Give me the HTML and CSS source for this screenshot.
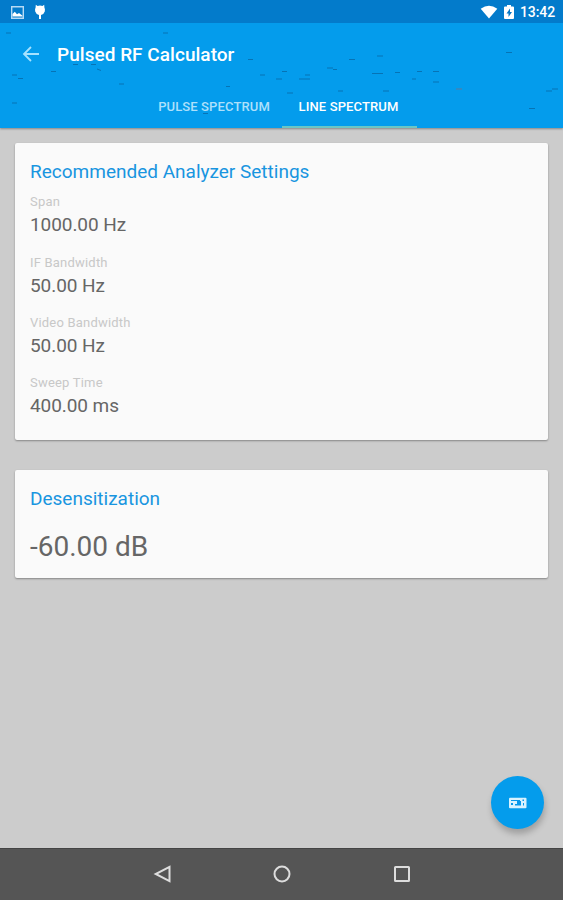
FILE: index.html
```
<!DOCTYPE html>
<html lang="en">
<head>
  <meta charset="utf-8">
  <title>Pulsed RF Calculator</title>
  <link rel="stylesheet" href="styles.css">
</head>
<body>
  <header class="header">
    <div class="status">
      <svg class="icon-image" width="13" height="13" viewBox="0 0 13 13"><path fill="none" stroke="#b5daf4" stroke-width="1.4" d="M.7.7h11.600v11.600H.7z"/><path fill="#fff" d="M1.500 10.500V8l2.300-2.200 2.200 2.400 2-1.200 3.500 2.700v.8z"/></svg>
      <svg class="icon-bug" width="12" height="16" viewBox="0 0 12 16"><path fill="#fff" d="M1.800.8 3.500 2Q6 1 8.500 2L10.200.8l.2 2.700Q11.300 5 10.800 7.500 9.800 10.500 7 11v4H5v-4Q2.200 10.500 1.200 7.500.7 5 1.600 3.500z"/></svg>
      <svg class="icon-wifi" width="18" height="14" viewBox="0 0 18 14"><path fill="#fff" d="M.7 3.700Q9-2.400 17.300 3.700L9 13.500z"/></svg>
      <svg class="icon-battery" width="10" height="15" viewBox="0 0 10 15"><path fill="#fff" d="M3 0h4v1.500h2q1 0 1 1V13q0 1-1 1H1q-1 0-1-1V2.500q0-1 1-1h2z"/><path fill="#0878c6" d="M6 3.500 2.500 8.500h2V12L8 7H6z"/></svg>
      <span class="clock">13:42</span>
    </div>
    <div class="toolbar">
      <svg class="back" width="18" height="18" viewBox="0 0 18 18"><path fill="none" stroke="#a6e2ff" stroke-width="1.800" d="M17 9H2M9 2 2 9l7 7"/></svg>
      <h1>Pulsed RF Calculator</h1>
    </div>
    <nav class="tabs">
      <a class="tab">PULSE SPECTRUM</a>
      <a class="tab active">LINE SPECTRUM</a>
    </nav>
    <svg class="specks" width="563" height="128" viewBox="0 0 563 128"><path fill="none" stroke="#0869a8" stroke-opacity=".8" d="M6 33h5M163 33h5M73 64.500h5M91 64.500h5M97 69l4 1.500M51 71.500h5M12 75h5M18 78.500h5M119 84h5M12 103h5M248 59.500h5M260 75h5M276 79h6M226 86.500h4M203 113.500h5M282 71.500h5M299 79h11M305 75h5M287 93h6M327 68h6M333 69.500h4M349 59.500h6M377 56h6M372 73.500h11M395 72.500h5M412 79h4M417 71.500h5M433 71.500h6M433 82h6M338 91h5M383 91h6M506 52.500h6M552 89h6M546 91h6M529 108.500h6"/><path stroke="#5e789b" d="M456 89h6"/></svg>
  </header>

  <main class="content">
    <section class="card settings">
      <h2>Recommended Analyzer Settings</h2>
      <dl>
        <dt>Span</dt>
        <dd>1000.00 Hz</dd>
        <dt>IF Bandwidth</dt>
        <dd>50.00 Hz</dd>
        <dt>Video Bandwidth</dt>
        <dd>50.00 Hz</dd>
        <dt>Sweep Time</dt>
        <dd>400.00 ms</dd>
      </dl>
    </section>
    <section class="card desens">
      <h2>Desensitization</h2>
      <p class="result">-60.00 dB</p>
    </section>
    <a class="fab">
      <svg width="18" height="12" viewBox="0 0 18 12"><rect y=".7" width="17.500" height="10.600" rx="1" fill="#d8f2ff"/><path fill="#0698eb" d="M2 3h9v1H2zM2 6h2v2H2zM8 4h4v4.500H6V7h2zM13.500 2.500H15V4h-1.500zM14 6h1v2.500h-1z"/></svg>
    </a>
  </main>

  <footer class="navbar">
    <svg width="18" height="18" viewBox="0 0 18 18"><path d="M16.500 1.800v14.400L2.700 9z"/></svg>
    <svg width="18" height="18" viewBox="0 0 18 18"><circle cx="9" cy="9" r="7.500"/></svg>
    <svg width="18" height="18" viewBox="0 0 18 18"><rect x="2" y="2" width="14" height="14" rx=".5"/></svg>
  </footer>
</body>
</html>
```

FILE: styles.css
```
* { box-sizing: border-box; }
body { margin: 0; width: 563px; height: 900px; display: flex; flex-direction: column; overflow: hidden; background: #ccc; font-family: Roboto, sans-serif; }
h1, h2, p, dl, dd { margin: 0; font-weight: 400; }
svg { display: block; flex: none; }

.header { position: relative; z-index: 1; height: 128px; background: #049cec; box-shadow: 0 1px 2px rgba(0,0,0,.35); }
.specks { position: absolute; top: 0; left: 0; }
.status { height: 23px; display: flex; align-items: center; padding: 1px 8px 0 11px; background: #037bcb; }
.icon-bug { margin-left: 10px; }
.icon-wifi { margin: 0 0 1px auto; }
.icon-battery { margin: 0 6px 0 6px; }
.clock { color: #fff; font-size: 14px; font-weight: 500; line-height: 23px; letter-spacing: -.1px; }
.toolbar { height: 62px; display: flex; align-items: center; padding-left: 22px; }
.toolbar h1 { margin-left: 17px; color: #fff; font-size: 19px; font-weight: 500; letter-spacing: .03px; }
.tabs { height: 43px; display: flex; padding-left: 146px; }
.tab { width: 136px; text-align: center; font-size: 13px; font-weight: 500; line-height: 43px; letter-spacing: .12px; color: #aee0fb; }
.tab.active { width: 135px; padding-right: 2px; color: #fff; border-bottom: 2px solid #6cc6c4; }

.content { position: relative; flex: 1; padding: 15px 15px 0; }
.card { padding: 0 15px; background: #fafafa; border-radius: 2px; box-shadow: 0 1px 2px rgba(0,0,0,.35); }
.card h2 { color: #1895e0; font-size: 19px; line-height: 24px; }
.settings { height: 297px; padding-top: 17px; margin-bottom: 30px; }
.settings dl { margin-top: 9.300px; }
.settings dt { height: 17px; font-size: 13px; line-height: 17px; letter-spacing: .2px; color: #c8c8c8; }
.settings dd { height: 43.400px; font-size: 19px; line-height: 29px; letter-spacing: -.07px; color: #666; }
.desens { height: 108px; padding-top: 17px; }
.result { margin-top: 18px; font-size: 28px; line-height: 36px; color: #666; }
.fab { position: absolute; right: 19px; bottom: 19px; width: 53px; height: 53px; display: flex; align-items: center; justify-content: center; border-radius: 50%; background: #049cec; box-shadow: 1px 5px 6px rgba(0,0,0,.22); }

.navbar { height: 52px; display: flex; align-items: center; justify-content: center; gap: 102px; padding-bottom: 1px; background: #555; border-top: 1px solid #444; }
.navbar svg { fill: none; stroke: #ddd; stroke-width: 2; }
```
